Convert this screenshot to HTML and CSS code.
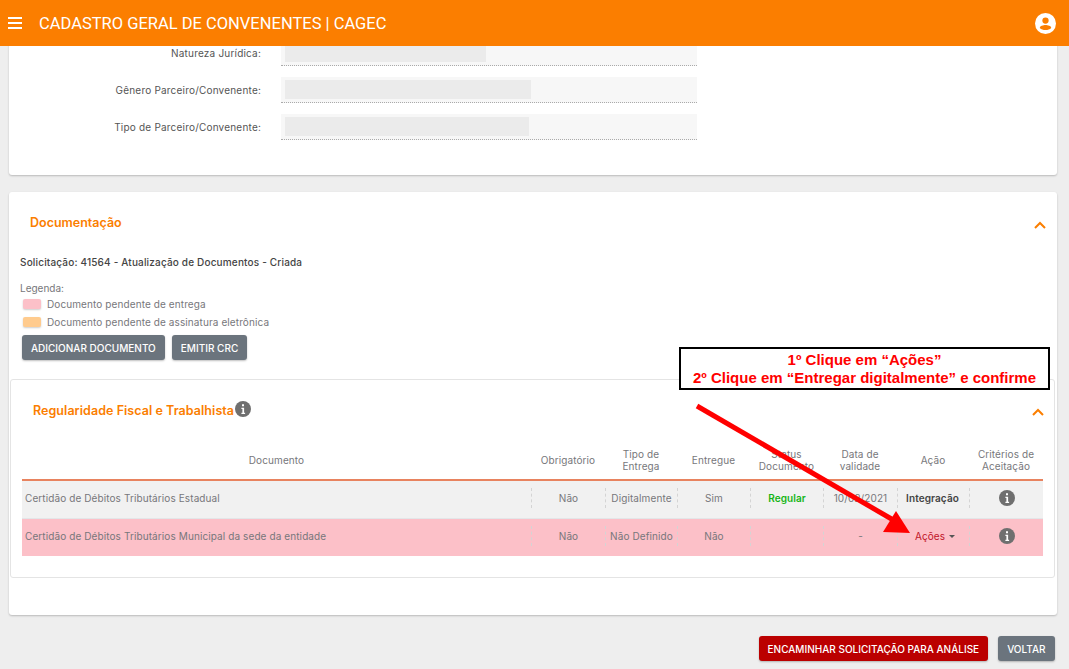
FILE: index.html
```html
<!DOCTYPE html>
<html lang="pt-BR">
<head>
  <meta charset="UTF-8" />
  <title>Cadastro Geral de Convenentes | CAGEC</title>
  <link rel="stylesheet" href="styles.css">
</head>
<body>

<header class="topbar">
  <svg class="menu-icon" viewBox="0 0 14 12"><path d="M0 1h14M0 6h14M0 11h14" /></svg>
  <h1>CADASTRO GERAL DE CONVENENTES | CAGEC</h1>
  <svg class="user-icon" viewBox="0 0 24 24">
    <circle cx="12" cy="12" r="12" fill="#fff" />
    <circle cx="12" cy="8.6" r="3.6" fill="#fb7e00" />
    <path d="M5.5 17c0-2.400 4-3.400 6.500-3.400s6.500 1 6.500 3.400c-1.500 1.700-3.900 2.400-6.500 2.400s-5-.7-6.500-2.400z" fill="#fb7e00" />
  </svg>
</header>

<main class="page">
  <section class="card card-top">
    <div class="field field-first">
      <label>Natureza Jurídica:</label>
      <div class="value"><span class="blur blur-1"></span></div>
    </div>
    <div class="field">
      <label>Gênero Parceiro/Convenente:</label>
      <div class="value"><span class="blur blur-2"></span></div>
    </div>
    <div class="field">
      <label>Tipo de Parceiro/Convenente:</label>
      <div class="value"><span class="blur blur-3"></span></div>
    </div>
  </section>

  <section class="card card-docs">
    <div class="panel-head">
      <h2>Documentação</h2>
      <svg class="chevron" viewBox="0 0 12 8"><path d="M1 7l5-5 5 5" /></svg>
    </div>
    <p class="request">Solicitação: 41564 - Atualização de Documentos - Criada</p>
    <p class="legend-title">Legenda:</p>
    <div class="legend-row"><span class="swatch swatch-pink"></span>Documento pendente de entrega</div>
    <div class="legend-row"><span class="swatch swatch-orange"></span>Documento pendente de assinatura eletrônica</div>
    <div class="doc-actions">
      <button class="btn">ADICIONAR DOCUMENTO</button>
      <button class="btn">EMITIR CRC</button>
    </div>

    <div class="inner-card">
      <div class="inner-head">
        <h3>Regularidade Fiscal e Trabalhista</h3>
        <svg class="info info-title" viewBox="0 0 16 16"><circle cx="8" cy="8" r="8" /><path class="info-i" d="M7 3.200h2v2H7zM6.400 6.700h2.700v5h1v1.200H6.400v-1.200h1v-3.800h-1z" /></svg>
        <svg class="chevron" viewBox="0 0 12 8"><path d="M1 7l5-5 5 5" /></svg>
      </div>
      <table class="docs">
        <thead>
          <tr>
            <th class="col-doc">Documento</th>
            <th>Obrigatório</th>
            <th>Tipo de<br>Entrega</th>
            <th>Entregue</th>
            <th>Status<br>Documento</th>
            <th>Data de<br>validade</th>
            <th>Ação</th>
            <th>Critérios de<br>Aceitação</th>
          </tr>
        </thead>
        <tbody>
          <tr class="row-grey">
            <td class="col-doc"><div class="cell cell-doc">Certidão de Débitos Tributários Estadual</div></td>
            <td><div class="cell">Não</div></td>
            <td><div class="cell">Digitalmente</div></td>
            <td><div class="cell">Sim</div></td>
            <td><div class="cell status-ok">Regular</div></td>
            <td><div class="cell">10/02/2021</div></td>
            <td><div class="cell action-text">Integração</div></td>
            <td><div class="cell"><svg class="info" viewBox="0 0 16 16"><circle cx="8" cy="8" r="8" /><path class="info-i" d="M7 3.200h2v2H7zM6.400 6.700h2.700v5h1v1.200H6.400v-1.200h1v-3.800h-1z" /></svg></div></td>
          </tr>
          <tr class="row-pink">
            <td class="col-doc"><div class="cell cell-doc">Certidão de Débitos Tributários Municipal da sede da entidade</div></td>
            <td><div class="cell">Não</div></td>
            <td><div class="cell">Não Definido</div></td>
            <td><div class="cell">Não</div></td>
            <td><div class="cell"></div></td>
            <td><div class="cell">-</div></td>
            <td><div class="cell action-link">Ações<span class="caret"></span></div></td>
            <td><div class="cell"><svg class="info" viewBox="0 0 16 16"><circle cx="8" cy="8" r="8" /><path class="info-i" d="M7 3.200h2v2H7zM6.400 6.700h2.700v5h1v1.200H6.400v-1.200h1v-3.800h-1z" /></svg></div></td>
          </tr>
        </tbody>
      </table>
    </div>
  </section>

  <div class="page-actions">
    <button class="btn btn-red">ENCAMINHAR SOLICITAÇÃO PARA ANÁLISE</button>
    <button class="btn btn-back">VOLTAR</button>
  </div>
</main>

<!-- annotation drawn over the screen -->
<div class="callout">1º Clique em “Ações”<br>2º Clique em “Entregar digitalmente” e confirme</div>
<svg class="arrow" viewBox="0 0 1069 669">
  <path d="M697 406L895 521" stroke="#ff0000" stroke-width="5" fill="none" />
  <polygon points="910,533 883,532 896,511" fill="#ff0000" />
</svg>

</body>
</html>
```

FILE: styles.css
```css
:root {
  --orange: #fb7e00;
  --grey-btn: #6b747d;
  --pink: #fcc0c8;
  --text: #77777b;
}

* {
  box-sizing: border-box;
}

html, body {
  height: 669px;
  overflow: hidden;
}

body {
  margin: 0;
  background: #eeeeee;
  font-family: Inter, "Liberation Sans", sans-serif;
  color: var(--text);
  font-size: 10px;
}

.topbar {
  height: 46px;
  background: var(--orange);
  display: flex;
  align-items: center;
  padding: 0 13px 0 8px;
  color: #fff;
  position: relative;
  z-index: 2;
}

.topbar h1 {
  margin: 0 0 0 17px;
  font-family: Roboto, sans-serif;
  font-size: 16.500px;
  font-weight: 400;
  flex: 1;
}

.menu-icon {
  width: 14px;
  height: 12px;
  stroke: #fff;
  stroke-width: 2;
  fill: none;
}

.user-icon {
  width: 21px;
  height: 21px;
}

.page {
  padding: 0 12px 0 9px;
}

.card {
  background: #fff;
  border-radius: 0 0 3px 3px;
  box-shadow: 0 1px 2px rgba(0, 0, 0, 0.22);
}

.card-top {
  height: 135px;
  padding-right: 360px;
  margin-bottom: 17px;
}

.field {
  display: flex;
  align-items: center;
  margin-bottom: 11px;
}

/* top of this row is scrolled under the header */
.field-first {
  margin-top: -6px;
}

.field label {
  width: 272px;
  text-align: right;
  padding-right: 20px;
  color: #555;
  letter-spacing: 0.2px;
}

.value {
  flex: 1;
  height: 26px;
  background: #f7f7f7;
  border-bottom: 1px dotted #aaa;
  padding: 3px 4px;
}

.blur {
  display: block;
  height: 19px;
  background: #ebebeb;
}

.blur-1 { width: 201px; }
.blur-2 { width: 246px; }
.blur-3 { width: 244px; }

.card-docs {
  border-radius: 3px;
  height: 423px;
  padding: 0 2px 0 1px;
}

.panel-head {
  display: flex;
  align-items: center;
  justify-content: space-between;
  padding: 6px 9px 0 20px;
  height: 60px;
}

.panel-head h2 {
  margin: 2px 0 7px;
  color: var(--orange);
  font-size: 12.500px;
  font-weight: 600;
}

.chevron {
  width: 12px;
  height: 8px;
  fill: none;
  stroke: var(--orange);
  stroke-width: 2;
}

.request {
  margin: 0 0 0 10px;
  font-weight: 500;
  color: #444;
  line-height: 20px;
  letter-spacing: 0.17px;
}

.legend-title {
  margin: 9px 0 0 10px;
  line-height: 14px;
}

.legend-row {
  display: flex;
  align-items: center;
  margin-left: 13px;
  height: 18px;
  letter-spacing: 0.1px;
}

.swatch {
  width: 18px;
  height: 10px;
  border-radius: 2px;
  margin-right: 6px;
  box-shadow: 0 1px 2px rgba(0, 0, 0, 0.2);
}

.swatch-pink { background: var(--pink); }
.swatch-orange { background: #ffcb8e; }

.doc-actions {
  display: flex;
  gap: 7px;
  margin: 4px 0 19px 12px;
}

.btn {
  height: 25px;
  border: none;
  border-radius: 3px;
  background: var(--grey-btn);
  color: #fff;
  font-family: Inter, sans-serif;
  font-size: 10px;
  font-weight: 500;
  padding: 0 9px;
  box-shadow: 0 1px 2px rgba(0, 0, 0, 0.25);
}

.inner-card {
  background: #fff;
  border: 1px solid #e4e4e4;
  border-radius: 3px;
  height: 199px;
  padding: 0 11px;
}

.inner-head {
  display: flex;
  align-items: center;
  height: 60px;
  padding: 0 0 0 11px;
}

.inner-head h3 {
  margin: 0;
  color: var(--orange);
  font-size: 12.500px;
  font-weight: 600;
  letter-spacing: 0.05px;
}

.inner-head .chevron {
  margin-left: auto;
  margin-right: -1px;
  margin-top: 4px;
}

.info {
  width: 16px;
  height: 16px;
  fill: #6f6f6f;
}

.info-title {
  margin-left: 1px;
  margin-bottom: 3px;
}

.info .info-i {
  fill: #fff;
}

.docs {
  width: 1021px;
  border-collapse: collapse;
  table-layout: fixed;
  letter-spacing: 0.1px;
}

.docs th {
  width: 73px;
  height: 40px;
  font-weight: 400;
  line-height: 12px;
  text-align: center;
  border-bottom: 2px solid #e8835f;
}

.docs th.col-doc,
.docs td.col-doc {
  width: 509px;
}

.docs th:nth-child(2) { width: 74px; }
.docs th:nth-child(3) { width: 72px; }
.docs th:nth-child(6) { width: 74px; }
.docs th:nth-child(7) { width: 72px; }
.docs th:nth-child(8) { width: 74px; }

.docs td {
  padding: 0 0 2px;
  height: 38px;
  text-align: center;
  border-bottom: 1px solid #e3e6e8;
}

.row-grey td { background: #f1f1f1; }

.row-pink td {
  background: var(--pink);
  border-bottom: none;
}

.cell {
  height: 20px;
  display: flex;
  align-items: center;
  justify-content: center;
  border-left: 1px dashed #d4d4d4;
}

.cell.cell-doc {
  border-left: none;
  justify-content: flex-start;
  padding-left: 3px;
}

.status-ok {
  color: #16b516;
  font-weight: 600;
}

.action-text {
  color: #444;
  font-weight: 600;
  padding-right: 2px;
}

.action-link {
  color: #c1132a;
  padding-left: 3px;
}

.caret {
  margin-left: 4px;
  border-left: 3.500px solid transparent;
  border-right: 3.500px solid transparent;
  border-top: 3.500px solid #555;
}

.page-actions {
  display: flex;
  justify-content: flex-end;
  gap: 10px;
  margin: 21px 2px 0 0;
}

.btn-red {
  background: #bb0000;
  padding: 0 8.500px;
}

.btn-back {
  padding: 0 9.500px;
}

.callout {
  position: absolute;
  left: 679px;
  top: 347px;
  width: 371px;
  height: 43px;
  border: 2px solid #000;
  background: #fff;
  color: #ff0000;
  font-family: "Liberation Sans", sans-serif;
  font-size: 15px;
  font-weight: 700;
  line-height: 18px;
  text-align: center;
  padding-top: 2px;
}

.arrow {
  position: absolute;
  left: 0;
  top: 0;
  width: 1069px;
  height: 669px;
  pointer-events: none;
}
```
